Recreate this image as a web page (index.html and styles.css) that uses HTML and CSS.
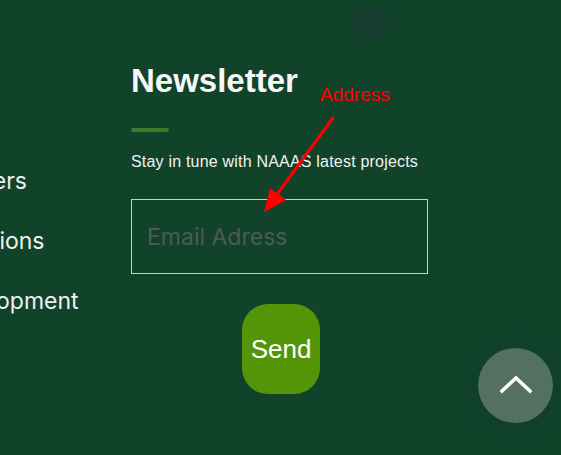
FILE: index.html
```html
<!DOCTYPE html>
<html lang="en">
<head>
    <meta charset="UTF-8">
    <meta name="viewport" content="width=device-width, initial-scale=1.0">
    <title>Newsletter</title>
    <link rel="stylesheet" href="styles.css">
</head>
<body>
    <div class="footer">
        <!-- 左侧链接 -->
        <ul class="footer-links">
            <li>Partners</li>
            <li>Donations</li>
            <li>Development</li>
        </ul>

        <!-- 订阅区域 -->
        <div class="newsletter">
            <h2 class="newsletter-title">Newsletter</h2>
            <div class="title-bar"></div>
            <p class="newsletter-text">Stay in tune with NAAAS latest projects</p>
            <input type="text" class="email-input" placeholder="Email Adress">
            <button class="send-btn">Send</button>
        </div>
    </div>

    <div class="top-dot"></div>

    <!-- 标注 -->
    <div class="note-label">Address</div>
    <svg class="note-arrow" width="80" height="100" viewBox="0 0 80 100" xmlns="http://www.w3.org/2000/svg">
        <line x1="72" y1="3" x2="14" y2="82" stroke="#ff0000" stroke-width="3" stroke-linecap="round"/>
        <polygon points="3,97 9,73 25,85" fill="#ff0000"/>
    </svg>

    <div class="scroll-top">
        <svg width="34" height="20" viewBox="0 0 34 20" fill="none" xmlns="http://www.w3.org/2000/svg">
            <path d="M3 17L17 4L31 17" stroke="#fff" stroke-width="3.5" stroke-linecap="square"/>
        </svg>
    </div>
</body>
</html>
```

FILE: styles.css
```css
* {
    margin: 0;
    padding: 0;
    box-sizing: border-box;
}

body {
    background-color: #11432b;
    color: #fff;
    font-family: 'Liberation Sans', Arial, sans-serif;
    height: 455px;
    overflow: hidden;
}

.footer {
    display: flex;
}

.footer-links {
    list-style: none;
    width: 196px;
    margin-left: -65px;
    padding-top: 151px;
    font-family: 'Inter', 'Noto Sans', sans-serif;
    font-size: 23px;
    line-height: 60px;
    color: #f0f0f0;
    white-space: nowrap;
}

.newsletter {
    width: 297px;
    padding-top: 62px;
    display: flex;
    flex-direction: column;
}

.newsletter-title {
    font-size: 33px;
    line-height: 38px;
    font-weight: 700;
    color: #f7f7f7;
}

.title-bar {
    width: 38px;
    height: 4px;
    margin-top: 28px;
    background-color: #3d7b2c;
    border-radius: 2px;
}

.newsletter-text {
    margin-top: 21px;
    font-size: 16px;
    line-height: 18px;
    letter-spacing: 0.2px;
    color: #f2f2f2;
    white-space: nowrap;
}

.email-input {
    margin-top: 28px;
    width: 297px;
    height: 75px;
    padding: 0 15px;
    background: transparent;
    border: 1px solid #c6d4cc;
    outline: none;
    font-family: 'Inter', 'Noto Sans', sans-serif;
    font-size: 23px;
    color: #fff;
}

.email-input::placeholder {
    color: #4d5b55;
}

.send-btn {
    align-self: center;
    margin-top: 30px;
    margin-left: 3px;
    width: 78px;
    height: 90px;
    background-color: #549507;
    color: #fff;
    border: none;
    border-radius: 26px;
    font-family: 'Liberation Sans', Arial, sans-serif;
    font-size: 26px;
}

.top-dot {
    position: absolute;
    left: 352px;
    top: 5px;
    width: 35px;
    height: 35px;
    border-radius: 50%;
    background-color: #163c30;
}

.note-label {
    position: absolute;
    left: 320px;
    top: 84px;
    font-size: 19px;
    color: #ff0000;
}

.note-arrow {
    position: absolute;
    left: 261px;
    top: 115px;
}

.scroll-top {
    position: fixed;
    right: 8px;
    bottom: 32px;
    width: 75px;
    height: 75px;
    border-radius: 50%;
    background-color: #537063;
    box-shadow: 0 0 30px rgba(0, 0, 0, 0.12);
    display: flex;
    align-items: center;
    justify-content: center;
    padding-bottom: 4px;
}
```
